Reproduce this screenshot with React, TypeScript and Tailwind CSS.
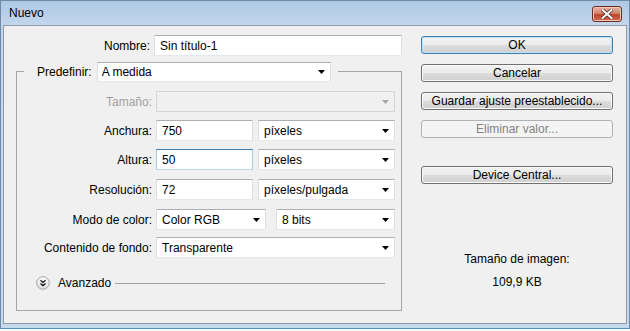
import React from "react";

const font = { fontFamily: '"Liberation Sans", Arial, sans-serif' };

const Arrow = ({ disabled = false }: { disabled?: boolean }) => (
  <svg width="7" height="4" viewBox="0 0 7 4" className="ml-auto mr-[5px] shrink-0">
    <path d="M0 0 H7 L3.5 4 Z" fill={disabled ? "#a8a8a8" : "#000"} />
  </svg>
);

const Input = ({ value, w, focused = false }: { value: string; w: string; focused?: boolean }) => (
  <div
    className={
      "h-[21px] flex items-center bg-white border pl-[5px] shrink-0 " +
      w +
      (focused
        ? " border-t-[#3d7bad] border-x-[#a4c9e3] border-b-[#b7d9ed]"
        : " border-t-[#abadb3] border-x-[#dbdfe6] border-b-[#e3e9ef]")
    }
  >
    <span className="leading-none">{value}</span>
  </div>
);

const Select = ({ value, w, disabled = false }: { value: string; w: string; disabled?: boolean }) => (
  <div
    className={
      "h-[21px] flex items-center border pl-[5px] shrink-0 " +
      w +
      (disabled
        ? " bg-[#f0f0f0] border-[#d5d5d5]"
        : " bg-white border-t-[#abadb3] border-x-[#dbdfe6] border-b-[#e3e9ef]")
    }
  >
    <span className="leading-none">{value}</span>
    <Arrow disabled={disabled} />
  </div>
);

const Btn = ({
  label,
  kind = "normal",
  className = "",
}: {
  label: string;
  kind?: "normal" | "default" | "disabled";
  className?: string;
}) => {
  const cls =
    kind === "disabled"
      ? "bg-[#f4f4f4] border-[#adb2b5] text-[#838383]"
      : kind === "default"
      ? "bg-[linear-gradient(#f2f2f2_0%,#ebebeb_50%,#dddddd_50%,#cfcfcf_100%)] border-[#3c7fb1] shadow-[inset_0_0_0_1px_#bfe4f7] text-black"
      : "bg-[linear-gradient(#f2f2f2_0%,#ebebeb_50%,#dddddd_50%,#cfcfcf_100%)] border-[#707070] shadow-[inset_0_0_0_1px_#fbfbfb] text-black";
  return (
    <div
      className={
        "h-[18px] w-[192px] rounded-[3px] border flex items-center justify-center leading-none " +
        cls +
        " " +
        className
      }
    >
      {label}
    </div>
  );
};

const Row = ({
  label,
  mt,
  disabled = false,
  children,
}: {
  label: string;
  mt: string;
  disabled?: boolean;
  children: React.ReactNode;
}) => (
  <div className={"flex items-center h-[21px] " + mt}>
    <div className={"w-[135px] text-right pr-[0px] " + (disabled ? "text-[#a0a0a0]" : "text-black")}>
      {label}
    </div>
    <div className="w-[4px]" />
    {children}
  </div>
);

export default function App() {
  return (
    <div className="w-[630px] h-[331px] bg-white text-[12px] text-black overflow-hidden" style={font}>
      <div className="w-[630px] h-[329px] flex flex-col border border-[#6f8aa6] border-b-[#4f93c4] bg-[linear-gradient(#aec8e4_0px,#c2d6ec_24px,#c6d9ed_100%)] px-[2px] pb-[4px]">
        {/* title bar */}
        <div className="h-[24px] flex items-center relative">
          <span className="ml-[6px] text-[12px] text-black leading-none">Nuevo</span>
          <div className="absolute right-[5px] top-[5px] w-[30px] h-[16px] rounded-[3px] border border-[#6c2a20] bg-[linear-gradient(#eab0a4_0%,#d7826f_45%,#c1432a_55%,#d06a4e_100%)] shadow-[inset_0_0_0_1px_#f3c8bd] flex items-center justify-center">
            <svg width="12" height="10" viewBox="0 0 12 10">
              <path
                d="M1.5 1 L10.5 9 M10.5 1 L1.5 9"
                stroke="#5a2b24"
                strokeWidth="3.6"
                strokeLinecap="square"
              />
              <path
                d="M1.5 1 L10.5 9 M10.5 1 L1.5 9"
                stroke="#ffffff"
                strokeWidth="2"
                strokeLinecap="square"
              />
            </svg>
          </div>
        </div>
        {/* body */}
        <div className="flex-1 border border-[#8f9aa6] bg-[#f0f0f0] flex">
          {/* left column */}
          <div className="flex flex-col w-[398px]">
            <div className="flex items-center h-[21px] mt-[9px]">
              <div className="w-[148px] text-right">Nombre:</div>
              <div className="w-[4px]" />
              <Input value="Sin título-1" w="w-[248px]" />
            </div>
            {/* group box */}
            <div className="ml-[12px] mt-[15px] w-[386px] h-[240px] border border-[#a5a5a5] flex flex-col">
              <div className="flex items-center h-[20px] -mt-[10px] ml-[7px] self-start bg-[#f0f0f0] pl-[13px] pr-[7px]">
                <span>Predefinir:</span>
                <div className="w-[5px]" />
                <div className="h-[20px] w-[234px] flex items-center bg-white border border-t-[#abadb3] border-x-[#dbdfe6] border-b-[#e3e9ef] pl-[4px]">
                  <span className="leading-none">A medida</span>
                  <Arrow />
                </div>
              </div>
              <Row label="Tamaño:" mt="mt-[9px]" disabled>
                <Select value="" w="w-[239px]" disabled />
              </Row>
              <Row label="Anchura:" mt="mt-[8px]">
                <Input value="750" w="w-[97px]" />
                <div className="w-[5px]" />
                <Select value="píxeles" w="w-[137px]" />
              </Row>
              <Row label="Altura:" mt="mt-[8px]">
                <Input value="50" w="w-[97px]" focused />
                <div className="w-[5px]" />
                <Select value="píxeles" w="w-[137px]" />
              </Row>
              <Row label="Resolución:" mt="mt-[9px]">
                <Input value="72" w="w-[97px]" />
                <div className="w-[5px]" />
                <Select value="píxeles/pulgada" w="w-[137px]" />
              </Row>
              <Row label="Modo de color:" mt="mt-[9px]">
                <Select value="Color RGB" w="w-[110px]" />
                <div className="w-[10px]" />
                <Select value="8 bits" w="w-[119px]" />
              </Row>
              <Row label="Contenido de fondo:" mt="mt-[7px]">
                <Select value="Transparente" w="w-[239px]" />
              </Row>
              <div className="flex items-center h-[14px] mt-[18px] ml-[19px] mr-[16px]">
                <svg width="14" height="14" viewBox="0 0 14 14" className="shrink-0">
                  <defs>
                    <linearGradient id="cg" x1="0" y1="0" x2="0" y2="1">
                      <stop offset="0" stopColor="#ffffff" />
                      <stop offset="1" stopColor="#dcdcdc" />
                    </linearGradient>
                  </defs>
                  <circle cx="7" cy="7" r="6.3" fill="url(#cg)" stroke="#a3a3a3" strokeWidth="1" />
                  <path d="M4.5 4.2 L7 6.4 L9.5 4.2 M4.5 7.4 L7 9.6 L9.5 7.4" fill="none" stroke="#1a1a1a" strokeWidth="1.3" />
                </svg>
                <span className="ml-[8px] leading-none">Avanzado</span>
                <div className="flex-1 ml-[4px] h-px bg-[#a0a0a0]" />
              </div>
            </div>
          </div>
          {/* right column */}
          <div className="flex flex-col ml-[19px] pt-[10px]">
            <Btn label="OK" kind="default" />
            <Btn label="Cancelar" className="mt-[10px]" />
            <Btn label="Guardar ajuste preestablecido..." className="mt-[10px]" />
            <Btn label="Eliminar valor..." kind="disabled" className="mt-[10px]" />
            <Btn label="Device Central..." className="mt-[28px]" />
            <div className="mt-[68px] h-[14px] leading-[14px] text-center">Tamaño de imagen:</div>
            <div className="mt-[9px] h-[14px] leading-[14px] text-center">109,9 KB</div>
          </div>
        </div>
      </div>
    </div>
  );
}
